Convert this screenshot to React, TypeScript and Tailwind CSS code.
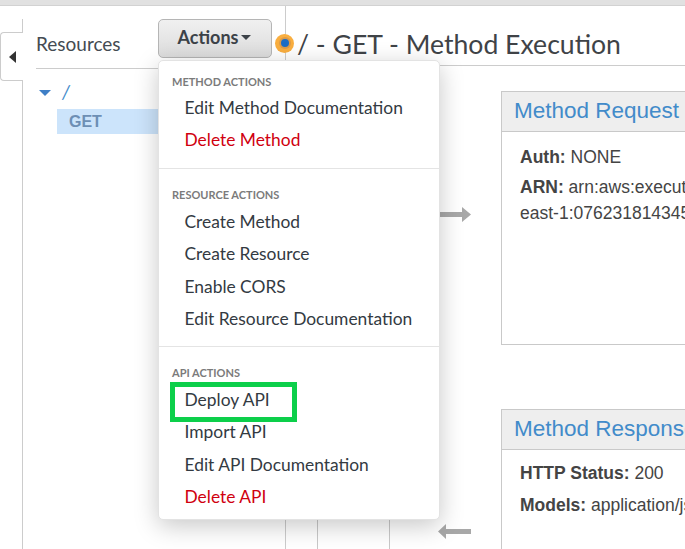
const lato = "font-['Lato',sans-serif]";
const arial = "font-['Liberation_Sans',Arial,sans-serif]";

function MenuItem({ label, danger }: { label: string; danger?: boolean }) {
  return (
    <div className={`h-[32.3px] pl-[25.5px] text-[17.4px] leading-[32px] whitespace-nowrap ${danger ? "text-[#d0000f]" : "text-[#333a42]"}`}>
      {label}
    </div>
  );
}

function MenuHeader({ label }: { label: string }) {
  return <div className="pl-[13px] h-[14px] text-[11px] leading-[14px] font-bold text-[#7b7b7b] whitespace-nowrap">{label}</div>;
}

function ActionsMenu() {
  return (
    <div className={`absolute left-[158px] top-[60px] w-[282px] h-[460px] bg-white border border-[#e3e3e3] rounded-[5px] shadow-[0_6px_24px_rgba(0,0,0,0.22)] ${lato}`}>
      <div className="pt-[14px] h-[108px] border-b border-[#e4e4e4]">
        <MenuHeader label="METHOD ACTIONS" />
        <div className="mt-[3px]">
          <MenuItem label="Edit Method Documentation" />
          <MenuItem label="Delete Method" danger />
        </div>
      </div>
      <div className="pt-[19px] h-[178px] border-b border-[#e4e4e4]">
        <MenuHeader label="RESOURCE ACTIONS" />
        <div className="mt-[4px]">
          <MenuItem label="Create Method" />
          <MenuItem label="Create Resource" />
          <MenuItem label="Enable CORS" />
          <MenuItem label="Edit Resource Documentation" />
        </div>
      </div>
      <div className="pt-[19px]">
        <MenuHeader label="API ACTIONS" />
        <div className="mt-[4px]">
          <MenuItem label="Deploy API" />
          <MenuItem label="Import API" />
          <MenuItem label="Edit API Documentation" />
          <MenuItem label="Delete API" danger />
        </div>
      </div>
      <div className="absolute left-[11px] top-[321px] w-[127px] h-[40px] border-[5px] border-[#0ccf4a]" />
    </div>
  );
}

function MethodCard({ title, height, children }: { title: string; height: number; children: React.ReactNode }) {
  return (
    <div className={`w-[300px] border border-[#c9c9c9] bg-white ${arial}`} style={{ height }}>
      <div className="h-[40px] bg-[#eeeeee] border-b border-[#c9c9c9] pl-[12px] text-[22.5px] leading-[38px] text-[#428bca] whitespace-nowrap">
        {title}
      </div>
      <div className="pl-[18px] pt-[12px] text-[17.5px] leading-[26px] text-[#444444]">{children}</div>
    </div>
  );
}

function Arrow({ left, className }: { left?: boolean; className: string }) {
  return (
    <svg className={`absolute ${className}`} width="33" height="15" viewBox="0 0 33 15">
      {left ? <path d="M0 7.5 L8 0 V5 H33 V10 H8 V15 Z" fill="#a8a8a8" /> : <path d="M33 7.5 L24 0 V5 H0 V10 H24 V15 Z" fill="#a8a8a8" />}
    </svg>
  );
}

export default function App() {
  return (
    <div className="relative w-[685px] h-[549px] overflow-hidden bg-white">
      <div className="h-[6px] bg-[#e1e1e1] border-b border-[#d2d2d2]" />
      <div className="flex h-[543px]">
        <div className="w-[23px] pt-[13px] flex flex-col shrink-0">
          <div className="h-[13px] border-r border-[#cccccc]" />
          <div className="h-[49px] border border-r-0 border-[#cccccc] rounded-l-[4px] flex items-center pl-[8px]">
            <svg width="7" height="12" viewBox="0 0 7 12"><path d="M7 0 V12 L0 6 Z" fill="#333333" /></svg>
          </div>
          <div className="flex-1 border-r border-[#cccccc]" />
        </div>
        <div className="w-[263px] shrink-0 pl-[13px] pt-[13px] border-r border-[#cccccc]">
          <div className={`h-[50px] border-b border-[#cccccc] text-[19px] leading-[50px] text-[#444b52] ${lato}`}>Resources</div>
          <div className={`flex items-center h-[33px] mt-[7px] pl-[3px] gap-[11px] ${lato}`}>
            <svg width="12" height="6" viewBox="0 0 12 6"><path d="M0 0 H12 L6 6 Z" fill="#3f7fc6" /></svg>
            <span className="text-[19px] italic text-[#428bca]">/</span>
          </div>
          <div className={`ml-[21px] h-[25px] pl-[12px] bg-[#cce4fb] text-[16px] leading-[25px] font-bold text-[#6d8fb5] ${arial}`}>GET</div>
        </div>
        <div className="relative flex-1 pt-[13px]">
          <div className={`h-[47px] border-b border-[#cccccc] flex items-center ${lato}`}>
            <div className="ml-[-11px] mr-[3px] mt-[2px] w-[19px] h-[19px] rounded-full bg-[#f9ae3f] flex items-center justify-center shrink-0">
              <div className="w-[12px] h-[12px] rounded-full bg-[#dc9a48] flex items-center justify-center">
                <div className="w-[8px] h-[8px] rounded-full bg-[#1b6cc4]" />
              </div>
            </div>
            <h1 className="mt-[4px] text-[26.6px] leading-[43px] text-[#3f4347] whitespace-nowrap">/ - GET - Method Execution</h1>
          </div>
          <div className="ml-[215px] mt-[25px]">
            <MethodCard title="Method Request" height={254}>
              <p className="mb-[4px]"><b>Auth:</b> NONE</p>
              <p className="whitespace-nowrap"><b>ARN:</b> arn:aws:execute-api:us-</p>
              <p className="whitespace-nowrap">east-1:076231814345:abc</p>
            </MethodCard>
            <div className="h-[64px]" />
            <MethodCard title="Method Response" height={200}>
              <p className="mt-[-2px] mb-[6px]"><b>HTTP Status:</b> 200</p>
              <p className="whitespace-nowrap"><b>Models:</b> application/json</p>
            </MethodCard>
          </div>
        </div>
      </div>
      <Arrow className="left-[438px] top-[207px]" />
      <Arrow left className="left-[438px] top-[524px]" />
      <div className="absolute left-[317px] top-[510px] bottom-0 w-px bg-[#c9c9c9]" />
      <div className="absolute left-[389px] top-[510px] bottom-0 w-px bg-[#c9c9c9]" />
      <div className={`absolute left-[158px] top-[19px] w-[114px] h-[39px] pb-[2px] pr-[1px] rounded-[5px] border border-[#b5b5b5] bg-gradient-to-b from-[#f0f0f0] to-[#dcdcdc] flex items-center justify-center gap-[3px] text-[18px] font-bold text-[#3c4248] ${lato}`}>
        Actions
        <svg width="10" height="5" viewBox="0 0 10 5"><path d="M0 0 H10 L5 5 Z" fill="#3c4248" /></svg>
      </div>
      <ActionsMenu />
    </div>
  );
}
